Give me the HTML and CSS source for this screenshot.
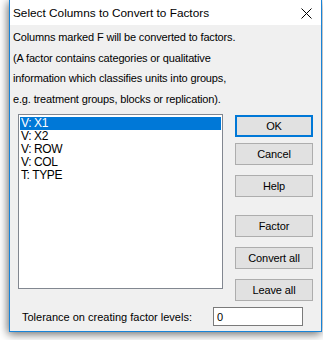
FILE: index.html
```html
<!DOCTYPE html>
<html lang="en">
<head>
  <meta charset="UTF-8">
  <title>Select Columns to Convert to Factors</title>
  <link rel="stylesheet" href="styles.css">
</head>
<body>
  <div class="dialog">
    <div class="titlebar">
      <span class="title">Select Columns to Convert to Factors</span>
      <svg class="close" width="11" height="11" viewBox="0 0 11 11">
        <path d="M0.5 0.5 L10.5 10.5 M10.5 0.5 L0.5 10.5" stroke="#000" stroke-width="1" fill="none"/>
      </svg>
    </div>
    <div class="content">
      <div class="intro">
        <div>Columns marked F will be converted to factors.</div>
        <div>(A factor contains categories or qualitative</div>
        <div>information which classifies units into groups,</div>
        <div>e.g. treatment groups, blocks or replication).</div>
      </div>
      <div class="main">
        <div class="listbox">
          <div class="item selected">V: X1</div>
          <div class="item">V: X2</div>
          <div class="item">V: ROW</div>
          <div class="item">V: COL</div>
          <div class="item">T: TYPE</div>
        </div>
        <div class="buttons">
          <button class="btn default">OK</button>
          <button class="btn gap-s">Cancel</button>
          <button class="btn gap-m">Help</button>
          <button class="btn gap-l">Factor</button>
          <button class="btn gap-m">Convert all</button>
          <button class="btn gap-m">Leave all</button>
        </div>
      </div>
      <div class="tolerance">
        <label for="tol">Tolerance on creating factor levels:</label>
        <input id="tol" type="text" value="0">
      </div>
    </div>
  </div>
</body>
</html>
```

FILE: styles.css
```css
body { margin: 0; background: #fff; width: 323px; height: 340px; overflow: hidden; }
.dialog { margin-left: 9px; width: 311px; height: 331px; border: 1px solid #1883d7; border-top: none; background: #f0f0f0; box-shadow: -1px 2px 9px rgba(0,0,0,0.6); display: flex; flex-direction: column; }
.titlebar { flex-shrink: 0; height: 25px; background: #fff; display: flex; align-items: center; justify-content: space-between; padding: 0 9px 0 3px; }
.title { font-family: "Liberation Sans", Arial, sans-serif; font-size: 11.8px; color: #000; }
.close { display: block; margin-top: 1px; }
.content { flex: 1; display: flex; flex-direction: column; font-family: "Liberation Sans", Arial, sans-serif; font-size: 11px; color: #000; }
.intro { padding: 2px 0 0 3px; line-height: 20.5px; letter-spacing: -0.15px; height: 82px; }
.main { display: flex; align-items: flex-start; margin-top: 5px; padding-left: 8px; }
.listbox { width: 201px; height: 169px; border: 1px solid #828790; background: #fff; padding: 2px 1px; font-size: 12px; letter-spacing: -0.4px; }
.item { height: 13px; line-height: 13px; padding-left: 1px; }
.item.selected { background: #0078d7; color: #fff; }
.buttons { display: flex; flex-direction: column; margin-left: 12px; padding-top: 1px; }
.btn { width: 78px; height: 22px; background: #e1e1e1; border: 1px solid #adadad; padding: 0; margin: 0; font-family: inherit; font-size: 11px; letter-spacing: -0.1px; color: #000; }
.btn.default { border: 2px solid #0078d7; }
.btn.gap-s { margin-top: 6px; }
.btn.gap-m { margin-top: 10px; }
.btn.gap-l { margin-top: 18px; }
.tolerance { display: flex; align-items: center; justify-content: space-between; margin-top: 6px; padding: 0 18px 0 12px; }
.tolerance input { width: 85px; height: 17px; border: 1px solid #7a7a7a; padding: 0 0 0 3px; margin: 0; font-family: inherit; font-size: 11px; background: #fff; color: #000; }
```
